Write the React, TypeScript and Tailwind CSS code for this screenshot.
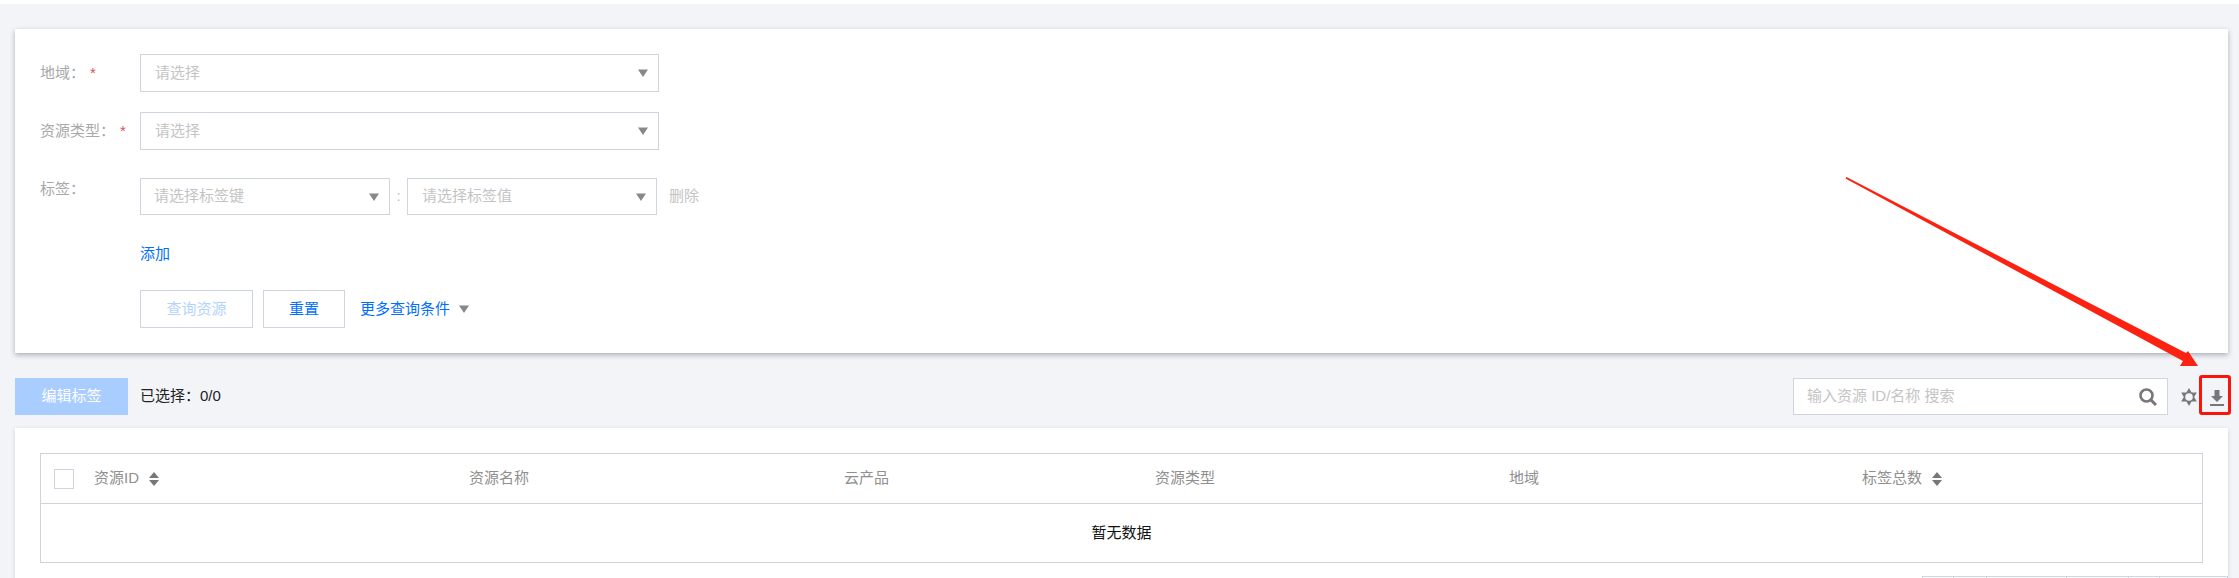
const font = { fontFamily: '"Liberation Sans", "Noto Sans CJK SC", sans-serif' };

const Caret = ({ className = '' }: { className?: string }) => (
  <svg width="10" height="8" viewBox="0 0 10 8" className={className}>
    <path d="M0 0.500h10L5 8z" fill="#888" />
  </svg>
);

const SortIcon = () => (
  <svg width="10" height="16" viewBox="0 0 10 16" className="ml-[10px]">
    <path d="M5 1L10 7H0zM5 15L0 9h10z" fill="#777" />
  </svg>
);

const Select = ({ text, className }: { text: string; className: string }) => (
  <div className={`flex items-center justify-between border border-[#cfd5de] bg-white pr-[10px] text-[15px] text-[#c4c4c4] ${className}`}>
    <span>{text}</span>
    <Caret />
  </div>
);

const FormLabel = ({ text, required }: { text: string; required?: boolean }) => (
  <div className="flex w-[100px] shrink-0 gap-[5px] text-[15px] text-[#a8a8a8]">
    <span>{text}：</span>
    {required && <span className="text-[#e1504a]">*</span>}
  </div>
);

const columns = [
  { title: '资源名称', width: 'w-[375px]' },
  { title: '云产品', width: 'w-[311px]' },
  { title: '资源类型', width: 'w-[354px]' },
  { title: '地域', width: 'w-[353px]' },
];

const pagerCells = ['w-[31px]', 'w-[33px]', 'w-[80px]', 'w-[62px]', 'w-[31px]', 'w-[31px]'];

export default function App() {
  return (
    <div style={font} className="relative h-[578px] w-[2239px] overflow-hidden bg-[#f2f4f8]">
      <div className="h-[4px] bg-white" />

      <div className="ml-[15px] mt-[25px] h-[324px] w-[2213px] bg-white pl-[25px] pt-[25px] shadow-[0_2px_5px_rgba(60,70,90,0.4)]">
        <div className="flex items-center">
          <FormLabel text="地域" required />
          <Select text="请选择" className="h-[38px] w-[519px] pl-[14px]" />
        </div>
        <div className="mt-[20px] flex items-center">
          <FormLabel text="资源类型" required />
          <Select text="请选择" className="h-[38px] w-[519px] pl-[14px]" />
        </div>
        <div className="mt-[28px] flex items-start">
          <FormLabel text="标签" />
          <div className="flex items-center">
            <Select text="请选择标签键" className="h-[37px] w-[250px] pl-[13px]" />
            <span className="w-[17px] text-center text-[15px] text-[#bbb]">:</span>
            <Select text="请选择标签值" className="h-[37px] w-[250px] pl-[14px]" />
            <span className="ml-[12px] text-[15px] text-[#c4c4c4]">删除</span>
          </div>
        </div>
        <div className="ml-[100px] mt-[28px] text-[15px] leading-[22px] text-[#006eff]">添加</div>
        <div className="ml-[100px] mt-[25px] flex items-center">
          <div className="flex h-[38px] w-[113px] items-center justify-center border border-[#cfd5de] text-[15px] text-[#b3d3ff]">查询资源</div>
          <div className="ml-[10px] flex h-[38px] w-[82px] items-center justify-center border border-[#cfd5de] text-[15px] text-[#006eff]">重置</div>
          <span className="ml-[15px] text-[15px] text-[#006eff]">更多查询条件</span>
          <Caret className="ml-[9px]" />
        </div>
      </div>

      <div className="ml-[15px] mt-[25px] flex h-[37px] w-[2209px] items-center">
        <div className="flex h-[37px] w-[113px] items-center justify-center bg-[#a9cdff] text-[15px] text-white">编辑标签</div>
        <span className="ml-[12px] text-[15px] text-[#222]">已选择：0/0</span>
        <div className="ml-auto flex h-[37px] w-[375px] items-center justify-between border border-[#cfd5de] bg-white pl-[13px] pr-[10px] text-[15px] text-[#c4c4c4]">
          <span>输入资源 ID/名称 搜索</span>
          <svg width="18" height="18" viewBox="0 0 18 18">
            <circle cx="7.500" cy="7.500" r="6" fill="none" stroke="#777" strokeWidth="2.600" />
            <path d="M12 12l5 5" stroke="#777" strokeWidth="3" />
          </svg>
        </div>
        <svg width="18" height="18" viewBox="0 0 18 18" className="ml-[12px]">
          <path d="M9 0l7.800 13.500H1.200zM9 18L1.200 4.500h15.600z" fill="#777" />
          <circle cx="9" cy="9" r="3.800" fill="#f2f4f8" />
        </svg>
        <svg width="14" height="16" viewBox="0 0 14 16" className="ml-[12px] mt-[2px]">
          <path d="M4.500 0h5v6H13L7 12 1 6h3.500zM0 14h14v2H0z" fill="#777" />
        </svg>
      </div>

      <div className="ml-[15px] mt-[13px] h-[160px] w-[2213px] bg-white pl-[25px] pt-[25px] shadow-[0_1px_4px_rgba(60,70,90,0.2)]">
        <div className="w-[2163px] border border-[#cfd3dc]">
          <div className="flex h-[50px] items-center border-b border-[#cfd3dc] text-[15px] text-[#8f8f8f]">
            <div className="flex w-[415px] items-center pl-[13px]">
              <div className="mr-[20px] h-[20px] w-[20px] border border-[#cfd5de]" />
              <span>资源ID</span>
              <SortIcon />
            </div>
            {columns.map((col) => (
              <div key={col.title} className={`pl-[13px] ${col.width}`}>{col.title}</div>
            ))}
            <div className="flex items-center pl-[13px]">
              <span>标签总数</span>
              <SortIcon />
            </div>
          </div>
          <div className="flex h-[58px] items-center justify-center text-[15px] text-[#111]">暂无数据</div>
        </div>
        <div className="ml-[1882px] mt-[13px] flex h-[10px] border-l border-t border-r border-[#cfd5de]">
          {pagerCells.map((w, i) => (
            <div key={i} className={`${w} border-r border-[#cfd5de] last:border-r-0`} />
          ))}
        </div>
      </div>

      {/* annotation drawn over the page */}
      <svg width="2239" height="578" viewBox="0 0 2239 578" className="pointer-events-none absolute left-0 top-0">
        <path d="M1846.500 177L2186 353L2188 351L2198 366L2180 366L2183 361L1845.500 178.500z" fill="#fb2212" />
      </svg>
      <div className="pointer-events-none absolute left-[2199px] top-[375px] h-[40px] w-[32px] rounded-[3px] border-[3px] border-[#f8150c]" />
    </div>
  );
}
